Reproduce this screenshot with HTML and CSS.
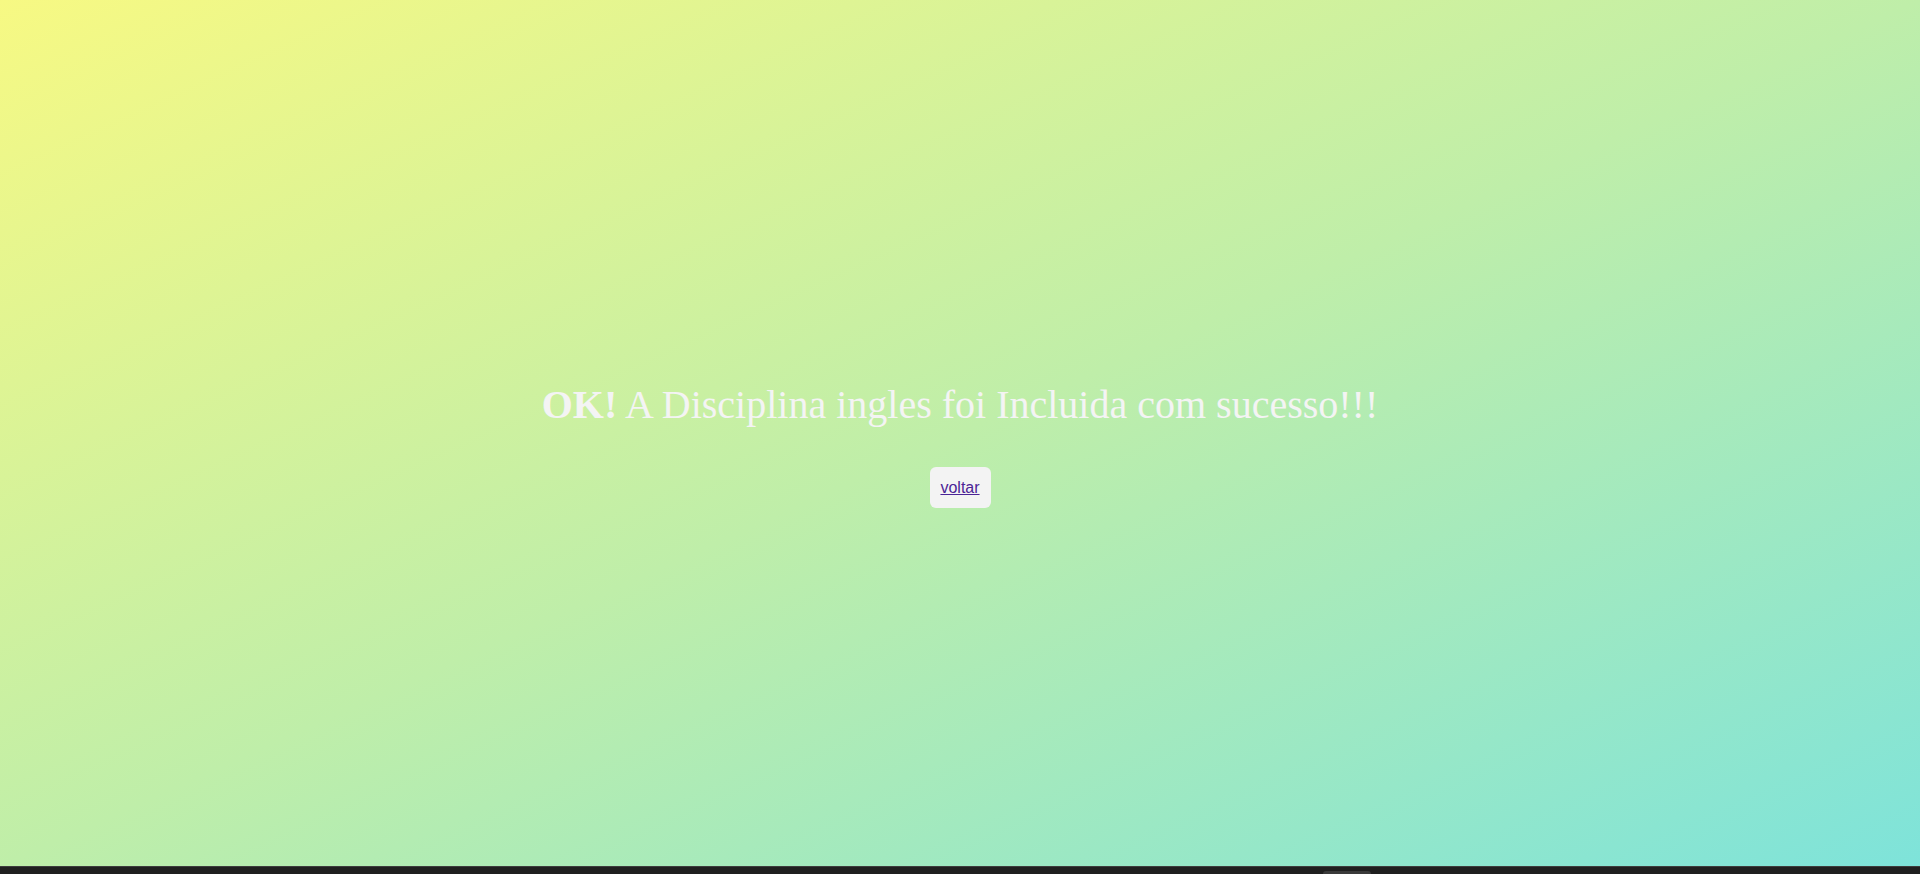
FILE: index.html
```html
<!DOCTYPE html>
<html lang="pt-BR">
<head>
<meta charset="utf-8">
<title>Sucesso</title>
<link rel="stylesheet" href="styles.css">
</head>
<body>
<main class="page">
  <h1 class="msg"><b>OK!</b> A Disciplina ingles foi Incluida com sucesso!!!</h1>
  <div class="actions"><a class="btn" href="#">voltar</a></div>
</main>
<footer class="bar"><span class="bar-tab"></span></footer>
</body>
</html>
```
FILE: styles.css
```css
html, body {
  margin: 0;
  padding: 0;
}
body {
  background: #202020;
  overflow: hidden;
}
.page {
  box-sizing: border-box;
  height: 866px;
  padding-top: 382px;
  background: linear-gradient(to bottom right, #f7f983 0%, #bfeea9 50%, #7ee3da 100%);
  text-align: center;
}
.msg {
  margin: 0;
  font-family: "Liberation Serif", "Times New Roman", serif;
  font-size: 40px;
  font-weight: normal;
  line-height: 45px;
  color: #f4f4f4;
}
.msg b {
  font-weight: bold;
}
.actions {
  margin-top: 40px;
  display: flex;
  justify-content: center;
}
.btn {
  display: inline-block;
  width: 61px;
  height: 41px;
  box-sizing: border-box;
  line-height: 41px;
  background: #f3f3f3;
  border-radius: 6px;
  font-family: "Liberation Sans", Arial, sans-serif;
  font-size: 16px;
  color: #4b2496;
  text-decoration: underline;
}
.bar {
  height: 8px;
  box-sizing: border-box;
  background: #1f1f1f;
  border-top: 1px solid #3d3d3d;
  position: relative;
}
.bar-tab {
  position: absolute;
  left: 1323px;
  top: 4px;
  width: 48px;
  height: 6px;
  border-radius: 3px;
  background: #3a3a3a;
}
```
